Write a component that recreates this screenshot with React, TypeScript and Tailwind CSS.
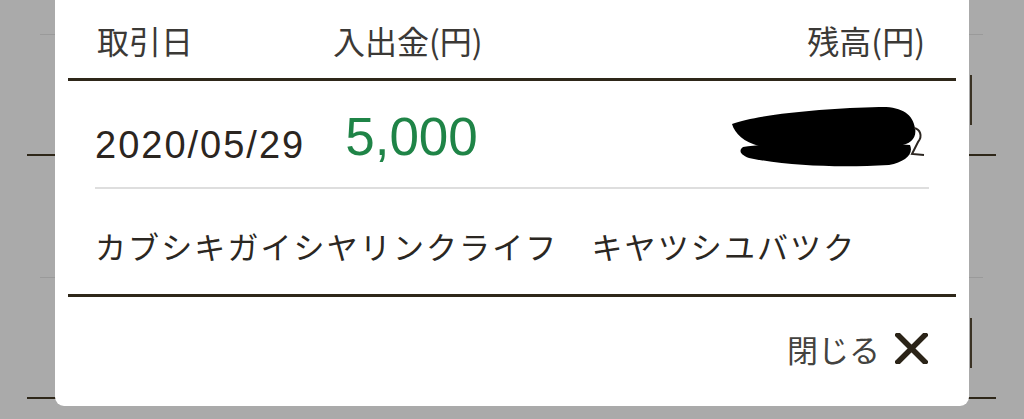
const JP = "font-['Noto_Sans_CJK_JP',sans-serif]";

function BackdropBlock() {
  return (
    <div className="h-[243px]">
      <div className="mx-[40px] mr-[41px] h-px bg-[#9a9a9a]" />
      <div className="mt-[40px] flex justify-end pr-[52px]">
        <div className="h-[50px] w-[200px] border-r-[2px] border-[#3a3224]" />
      </div>
      <div className="mt-[29px] ml-[27px] mr-[28px] h-[2px] bg-[#2e2719]" />
    </div>
  );
}

function CloseIcon() {
  return (
    <svg width="33" height="31" viewBox="0 0 33 31" className="shrink-0">
      <path d="M3 2 L30 29 M30 2 L3 29" stroke="#2b2418" strokeWidth="5.5" strokeLinecap="square" />
    </svg>
  );
}

// hand-drawn marker scribble covering the balance
function Redaction() {
  return (
    <svg width="200" height="62" viewBox="0 0 200 62" className="shrink-0">
      <path
        d="M3 18 C30 8 100 2 150 1 C172 0 184 8 186 22 C188 32 182 38 170 40 L30 40 C15 36 6 28 3 18 Z"
        fill="#000"
      />
      <path
        d="M14 41 C60 35 140 35 181 39 C185 48 176 56 160 59 C110 62 60 60 20 52 C10 48 10 44 14 41 Z"
        fill="#000"
      />
      <path d="M185 22 C191 23 194 30 189 36 L183 48 L195 49" stroke="#2b2520" strokeWidth="2" fill="none" />
    </svg>
  );
}

export default function App() {
  return (
    <div className="relative h-[419px] w-[1024px] overflow-hidden bg-[#aaaaaa]">
      {/* page behind the sheet */}
      <div className="pt-[34px]">
        <BackdropBlock />
        <BackdropBlock />
      </div>

      {/* transaction detail sheet */}
      <div className="absolute left-[55px] top-0 w-[914px] rounded-b-[9px] bg-white px-[13px] pb-[42px]">
        <div className={`${JP} flex h-[78px] items-center px-[29px] pr-[31px] pt-[2px] text-[32px] leading-none text-[#3b3936]`}>
          <div className="w-[236px]">取引日</div>
          <div>入出金(円)</div>
          <div className="ml-auto">残高(円)</div>
        </div>
        <div className="h-[3px] bg-[#2e2719]" />

        <div className="px-[27px]">
          <div className="flex h-[106px] items-start">
            <div className="mt-[45px] font-['Liberation_Sans',sans-serif] text-[38px] leading-none tracking-[2px] text-[#2b2520]">
              2020/05/29
            </div>
            <div className="ml-[40px] mt-[29px] font-['Liberation_Sans',sans-serif] text-[53px] leading-none text-[#1f8447]">
              5,000
            </div>
            <div className="ml-auto mt-[25px]">
              <Redaction />
            </div>
          </div>
          <div className="h-[2px] bg-[#dedede]" />
          <div className={`${JP} flex h-[105px] items-center pt-[8px] text-[31px] leading-none tracking-[2.1px] text-[#2b2722]`}>
            カブシキガイシヤリンクライフ　キヤツシユバツク
          </div>
        </div>
        <div className="h-[3px] bg-[#2e2719]" />

        <div className="flex items-center justify-end gap-[15px] pr-[28px] pt-[36px]">
          <span className={`${JP} text-[31px] leading-none text-[#444340]`}>閉じる</span>
          <CloseIcon />
        </div>
      </div>
    </div>
  );
}
